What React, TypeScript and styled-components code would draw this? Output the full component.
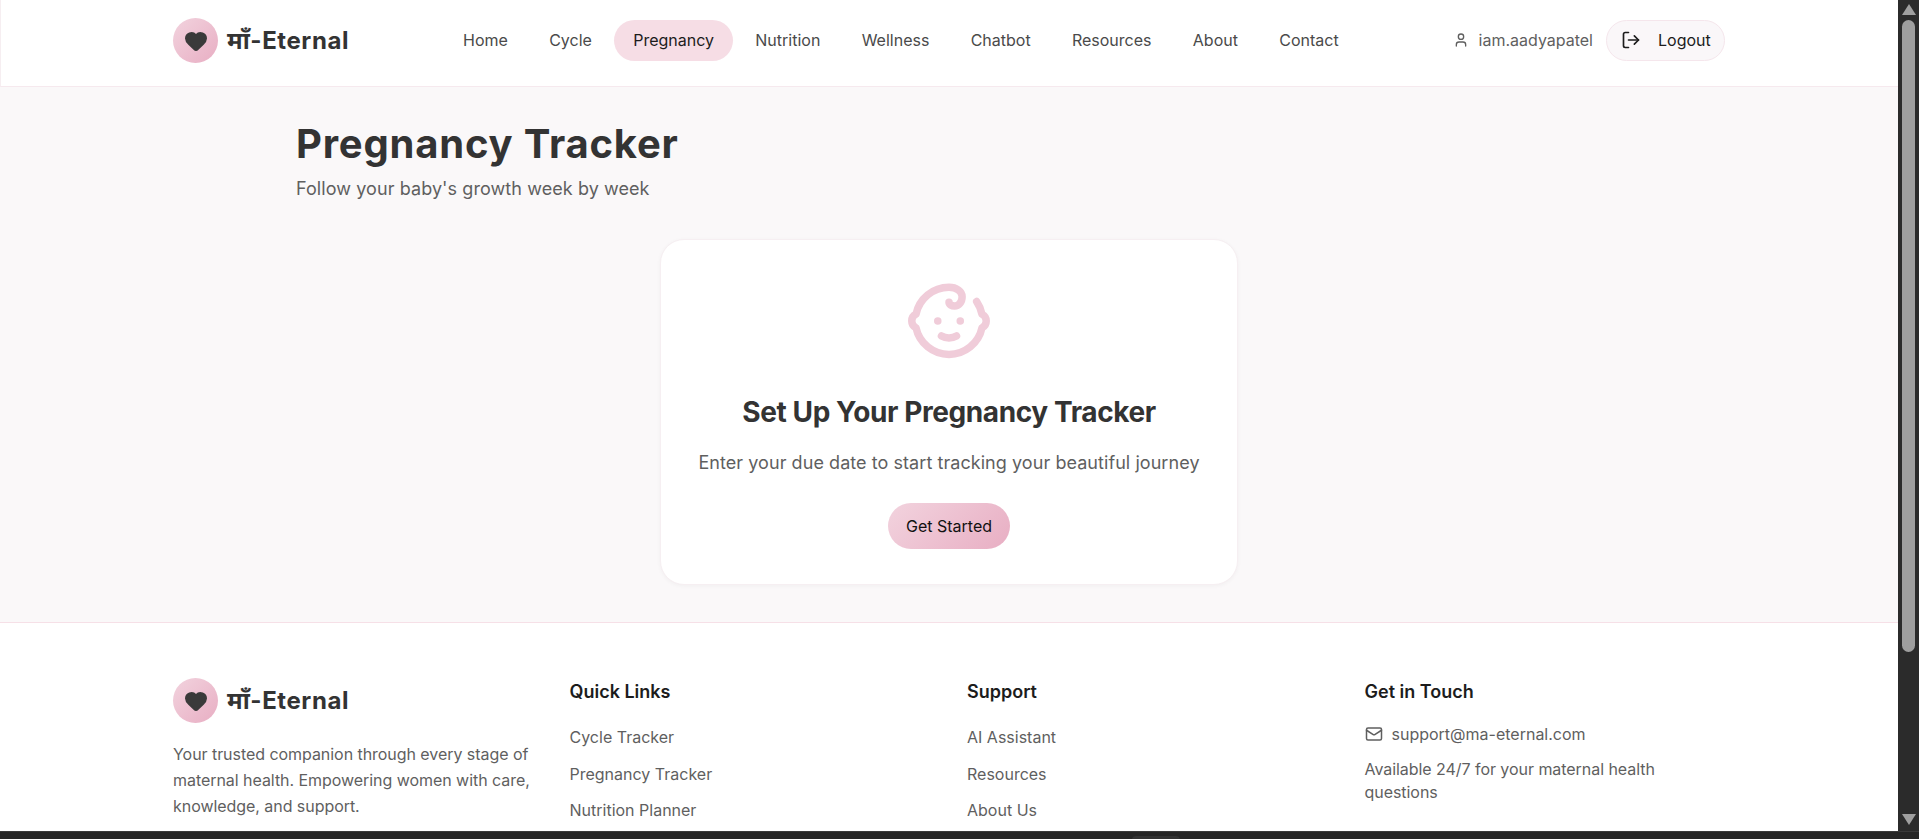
import React from "react";
import styled, { createGlobalStyle } from "styled-components";
import { Baby, Heart, LogOut, Mail, User } from "lucide-react";

const GlobalStyle = createGlobalStyle`
  html, body {
    margin: 0;
    padding: 0;
    height: 839px;
    overflow: hidden;
    background: #fff;
    font-family: Inter, "Noto Sans", sans-serif;
  }
  * { box-sizing: border-box; }
`;

const headingFont = `Inter, "Noto Sans", "DejaVu Sans", sans-serif`;

const Screen = styled.div`
  width: 1919px;
  height: 839px;
  display: flex;
  flex-direction: column;
  overflow: hidden;
`;

const Viewport = styled.div`
  height: 831px;
  display: flex;
`;

const Page = styled.div`
  width: 1898px;
  height: 831px;
  overflow: hidden;
  background: #fff;
`;

const Scrollbar = styled.div`
  width: 21px;
  height: 831px;
  background: #2b2b2b;
  display: flex;
  flex-direction: column;
  align-items: center;
  justify-content: space-between;
  padding: 4px 0 6px;
`;

const Arrow = styled.div<{ $down?: boolean }>`
  width: 0;
  height: 0;
  border-left: 7px solid transparent;
  border-right: 7px solid transparent;
  ${(p) =>
    p.$down
      ? "border-top: 11px solid #9f9f9f;"
      : "border-bottom: 11px solid #9f9f9f;"}
`;

const Thumb = styled.div`
  width: 13px;
  height: 632px;
  margin-top: 5px;
  margin-bottom: auto;
  border-radius: 7px;
  background: #9f9f9f;
`;

const BottomBar = styled.div`
  height: 8px;
  background: #262626;
  border-top: 1px solid #3a3a3a;
  padding-left: 1132px;
`;

const BottomTab = styled.div`
  width: 48px;
  height: 8px;
  margin-top: 4px;
  border-radius: 4px 4px 0 0;
  background: #333;
`;

const Header = styled.header`
  height: 87px;
  background: #fff;
  border-left: 1px solid #f6eef1;
  border-bottom: 1px solid #f6e9ee;
  padding: 0 173px 5px 172px;
  display: flex;
  align-items: center;
  justify-content: space-between;
`;

const LogoWrap = styled.div`
  display: flex;
  align-items: center;
  gap: 9px;
`;

const LogoBadge = styled.div`
  width: 45px;
  height: 45px;
  border-radius: 50%;
  background: linear-gradient(135deg, #f2d3de, #e8aec3);
  display: flex;
  align-items: center;
  justify-content: center;
  color: #3a3a3a;
`;

const LogoText = styled.span`
  font-family: ${headingFont};
  font-size: 24px;
  font-weight: 700;
  letter-spacing: 0.6px;
  color: #333;
  padding-bottom: 3px;
`;

const Nav = styled.nav`
  display: flex;
  align-items: center;
  gap: 3.3px;
`;

const NavItem = styled.a<{ $active?: boolean }>`
  height: 41px;
  padding: 0 19px 2px;
  border-radius: 21px;
  display: flex;
  align-items: center;
  font-size: 16px;
  font-weight: 400;
  color: ${(p) => (p.$active ? "#1c1c1c" : "#4a4a4a")};
  background: ${(p) => (p.$active ? "#f6dde5" : "transparent")};
`;

const UserArea = styled.div`
  display: flex;
  align-items: center;
`;

const UserName = styled.span`
  display: flex;
  align-items: center;
  gap: 10px;
  font-size: 16px;
  color: #5f5f5f;
  margin-right: 13px;
  padding-bottom: 2px;
`;

const LogoutButton = styled.button`
  width: 119px;
  height: 41px;
  border: 1px solid #f5e6ec;
  border-radius: 21px;
  background: #faf7f9;
  display: flex;
  align-items: center;
  gap: 17px;
  padding: 0 0 2px 14px;
  font-family: inherit;
  font-size: 16px;
  font-weight: 400;
  color: #1c1c1c;
`;

const Main = styled.main`
  height: 535px;
  background: #faf8f9;
  padding: 27px 296px 0;
`;

const Title = styled.h1`
  margin: 0;
  font-family: ${headingFont};
  font-size: 40px;
  line-height: 60px;
  font-weight: 700;
  letter-spacing: 0.8px;
  color: #333;
`;

const Subtitle = styled.p`
  margin: 1px 0 0;
  font-size: 18px;
  line-height: 28px;
  letter-spacing: 0.08px;
  color: #5f5f5f;
`;

const Card = styled.section`
  width: 578px;
  height: 346px;
  margin: 36px auto 0;
  background: #fff;
  border: 1px solid #f6eff2;
  border-radius: 24px;
  box-shadow: 0 1px 4px rgba(0, 0, 0, 0.04);
  padding-top: 36px;
  display: flex;
  flex-direction: column;
  align-items: center;
`;

const CardTitle = styled.h2`
  margin: 28px 0 0;
  font-family: ${headingFont};
  font-size: 28px;
  line-height: 36px;
  font-weight: 700;
  letter-spacing: -0.4px;
  color: #333;
`;

const CardText = styled.p`
  margin: 19px 0 0;
  font-size: 18px;
  line-height: 28px;
  letter-spacing: 0.06px;
  color: #5f5f5f;
`;

const PrimaryButton = styled.button`
  width: 122px;
  height: 46px;
  margin-top: 26px;
  border: none;
  border-radius: 23px;
  padding: 0 0 1px;
  background: linear-gradient(135deg, #f2d3de, #e8aec3);
  font-family: inherit;
  font-size: 16px;
  font-weight: 400;
  color: #111;
`;

const Footer = styled.footer`
  height: 300px;
  background: #fff;
  border-top: 1px solid #f6e0e7;
  padding: 55px 173px 0;
  display: grid;
  grid-template-columns: 358.5px repeat(3, 359.5px);
  column-gap: 38px;
  align-items: start;
`;

const FooterColumn = styled.div`
  display: flex;
  flex-direction: column;
`;

const FooterText = styled.p<{ $top: number; $line: number }>`
  margin: ${(p) => p.$top}px 0 0;
  font-size: 16px;
  line-height: ${(p) => p.$line}px;
  letter-spacing: -0.05px;
  color: #5f5f5f;
`;

const FooterHeading = styled.h3`
  margin: 0 0 19px;
  font-family: ${headingFont};
  font-size: 18px;
  line-height: 28px;
  font-weight: 600;
  color: #1c1c1c;
`;

const LinkList = styled.ul`
  margin: 0;
  padding: 0;
  list-style: none;
  display: flex;
  flex-direction: column;
  gap: 12px;
`;

const FooterLink = styled.li`
  font-size: 16px;
  line-height: 24.5px;
  color: #5f5f5f;
`;

const EmailRow = styled.div`
  display: flex;
  align-items: center;
  gap: 9px;
  font-size: 16px;
  line-height: 24px;
  color: #5f5f5f;
  margin-top: -3px;
`;

const navLinks = [
  "Home",
  "Cycle",
  "Pregnancy",
  "Nutrition",
  "Wellness",
  "Chatbot",
  "Resources",
  "About",
  "Contact",
];

function Logo() {
  return (
    <LogoWrap>
      <LogoBadge>
        <Heart size={24} fill="currentColor" />
      </LogoBadge>
      <LogoText>माँ-Eternal</LogoText>
    </LogoWrap>
  );
}

export default function App() {
  return (
    <Screen>
      <GlobalStyle />
      <Viewport>
        <Page>
          <Header>
            <Logo />
            <Nav>
              {navLinks.map((link) => (
                <NavItem key={link} $active={link === "Pregnancy"}>
                  {link}
                </NavItem>
              ))}
            </Nav>
            <UserArea>
              <UserName>
                <User size={16} />
                iam.aadyapatel
              </UserName>
              <LogoutButton>
                <LogOut size={20} />
                Logout
              </LogoutButton>
            </UserArea>
          </Header>
          <Main>
            <Title>Pregnancy Tracker</Title>
            <Subtitle>Follow your baby's growth week by week</Subtitle>
            <Card>
              <Baby size={90} color="#f0ccd9" />
              <CardTitle>Set Up Your Pregnancy Tracker</CardTitle>
              <CardText>
                Enter your due date to start tracking your beautiful journey
              </CardText>
              <PrimaryButton>Get Started</PrimaryButton>
            </Card>
          </Main>
          <Footer>
            <FooterColumn>
              <Logo />
              <FooterText $top={18} $line={26}>
                Your trusted companion through every stage of maternal health.
                Empowering women with care, knowledge, and support.
              </FooterText>
            </FooterColumn>
            <FooterColumn>
              <FooterHeading>Quick Links</FooterHeading>
              <LinkList>
                <FooterLink>Cycle Tracker</FooterLink>
                <FooterLink>Pregnancy Tracker</FooterLink>
                <FooterLink>Nutrition Planner</FooterLink>
              </LinkList>
            </FooterColumn>
            <FooterColumn>
              <FooterHeading>Support</FooterHeading>
              <LinkList>
                <FooterLink>AI Assistant</FooterLink>
                <FooterLink>Resources</FooterLink>
                <FooterLink>About Us</FooterLink>
              </LinkList>
            </FooterColumn>
            <FooterColumn>
              <FooterHeading>Get in Touch</FooterHeading>
              <EmailRow>
                <Mail size={18} />
                support@ma-eternal.com
              </EmailRow>
              <FooterText $top={12} $line={23}>
                Available 24/7 for your maternal health questions
              </FooterText>
            </FooterColumn>
          </Footer>
        </Page>
        <Scrollbar>
          <Arrow />
          <Thumb />
          <Arrow $down />
        </Scrollbar>
      </Viewport>
      <BottomBar>
        <BottomTab />
      </BottomBar>
    </Screen>
  );
}
